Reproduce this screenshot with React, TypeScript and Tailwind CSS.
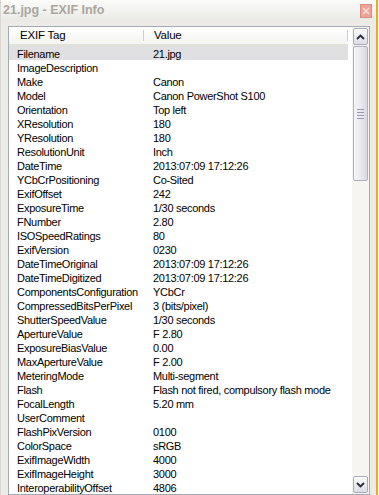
import React from "react";

const rows: [string, string][] = [
  ["Filename", "21.jpg"],
  ["ImageDescription", ""],
  ["Make", "Canon"],
  ["Model", "Canon PowerShot S100"],
  ["Orientation", "Top left"],
  ["XResolution", "180"],
  ["YResolution", "180"],
  ["ResolutionUnit", "Inch"],
  ["DateTime", "2013:07:09 17:12:26"],
  ["YCbCrPositioning", "Co-Sited"],
  ["ExifOffset", "242"],
  ["ExposureTime", "1/30 seconds"],
  ["FNumber", "2.80"],
  ["ISOSpeedRatings", "80"],
  ["ExifVersion", "0230"],
  ["DateTimeOriginal", "2013:07:09 17:12:26"],
  ["DateTimeDigitized", "2013:07:09 17:12:26"],
  ["ComponentsConfiguration", "YCbCr"],
  ["CompressedBitsPerPixel", "3 (bits/pixel)"],
  ["ShutterSpeedValue", "1/30 seconds"],
  ["ApertureValue", "F 2.80"],
  ["ExposureBiasValue", "0.00"],
  ["MaxApertureValue", "F 2.00"],
  ["MeteringMode", "Multi-segment"],
  ["Flash", "Flash not fired, compulsory flash mode"],
  ["FocalLength", "5.20 mm"],
  ["UserComment", ""],
  ["FlashPixVersion", "0100"],
  ["ColorSpace", "sRGB"],
  ["ExifImageWidth", "4000"],
  ["ExifImageHeight", "3000"],
  ["InteroperabilityOffset", "4806"],
];

function Chevron({ up }: { up: boolean }) {
  return (
    <svg width="9" height="6" viewBox="0 0 9 6">
      <path
        d={up ? "M1 5 L4.5 1.5 L8 5" : "M1 1 L4.5 4.5 L8 1"}
        fill="none"
        stroke="#2a2a3a"
        strokeWidth="1.8"
      />
    </svg>
  );
}

export default function App() {
  return (
    <div className="w-[379px] h-[495px] overflow-hidden flex bg-[#f4f4f2] font-['Liberation_Sans',Arial,sans-serif]">
      <div className="w-[376px] h-full flex flex-col bg-[#ecebe6] border-l border-[#d9d8d2]">
        {/* title bar */}
        <div className="h-[21px] shrink-0 flex items-center justify-between pl-[2px] pr-[4px] bg-gradient-to-b from-[#fbfbfa] to-[#e9e9e5]">
          <span className="text-[12.5px] font-bold text-[#aaa69d] leading-none">21.jpg - EXIF Info</span>
          <div className="w-[12px] h-[14px] mt-[1px] bg-[#eba497] border border-[#dc8c80] flex items-center justify-center">
            <svg width="8" height="8" viewBox="0 0 8 8">
              <path d="M1 1 L7 7 M7 1 L1 7" stroke="#f9dcd6" strokeWidth="1.6" />
            </svg>
          </div>
        </div>
        {/* body */}
        <div className="flex-1 flex flex-col pt-[5px] pl-[7px] pr-[6px] pb-[2px]">
          <div className="flex-1 flex border border-[#a3a9b5] bg-white overflow-hidden">
            {/* list content */}
            <div className="flex-1 flex flex-col pr-[4px] overflow-hidden">
              <div className="h-[19px] shrink-0 flex text-[11.5px] tracking-[-0.2px] text-black bg-gradient-to-b from-[#ffffff] to-[#f4f4f1] border-b-[2px] border-[#e2e1da]">
                <div className="w-[135px] flex items-center pl-[11px] border-r border-[#cfcdc4] my-[3px]">EXIF Tag</div>
                <div className="flex-1 flex items-center pl-[10px] border-r border-[#cfcdc4] my-[3px]">Value</div>
              </div>
              <div className="flex flex-col text-[11px] tracking-[-0.3px] text-black">
                {rows.map(([k, v], i) => (
                  <div
                    key={k}
                    className={
                      "h-[14px] shrink-0 flex items-center leading-none pt-[2px] " +
                      (i === 0 ? "bg-[#e0e0e3]" : "")
                    }
                  >
                    <div className="w-[135px] pl-[8px] whitespace-nowrap">{k}</div>
                    <div className="flex-1 pl-[9px] whitespace-nowrap">{v}</div>
                  </div>
                ))}
              </div>
            </div>
            {/* scrollbar */}
            <div className="w-[17px] shrink-0 flex flex-col bg-[#f6f5f2] py-[1px]">
              <div className="h-[17px] shrink-0 mx-[1px] rounded-[2px] border border-[#a9abb8] bg-gradient-to-b from-[#fbfbfd] to-[#dcdde6] flex items-center justify-center">
                <Chevron up />
              </div>
              <div className="h-[135px] shrink-0 mx-[1px] mt-[1px] rounded-[2px] border border-[#b0b2c0] bg-gradient-to-r from-[#f4f4f8] via-[#eaeaf1] to-[#d7d8e2] flex flex-col items-center justify-center gap-[2px]">
                <div className="w-[7px] h-[1px] bg-[#9a9cae]" />
                <div className="w-[7px] h-[1px] bg-[#9a9cae]" />
                <div className="w-[7px] h-[1px] bg-[#9a9cae]" />
                <div className="w-[7px] h-[1px] bg-[#9a9cae]" />
              </div>
              <div className="flex-1" />
              <div className="h-[17px] shrink-0 mx-[1px] rounded-[2px] border border-[#a9abb8] bg-gradient-to-b from-[#fbfbfd] to-[#dcdde6] flex items-center justify-center">
                <Chevron up={false} />
              </div>
            </div>
          </div>
        </div>
      </div>
      <div className="w-[2px] h-full bg-[#e2ae2c]" />
      <div className="w-[1px] h-full bg-[#f7f6f0]" />
    </div>
  );
}
